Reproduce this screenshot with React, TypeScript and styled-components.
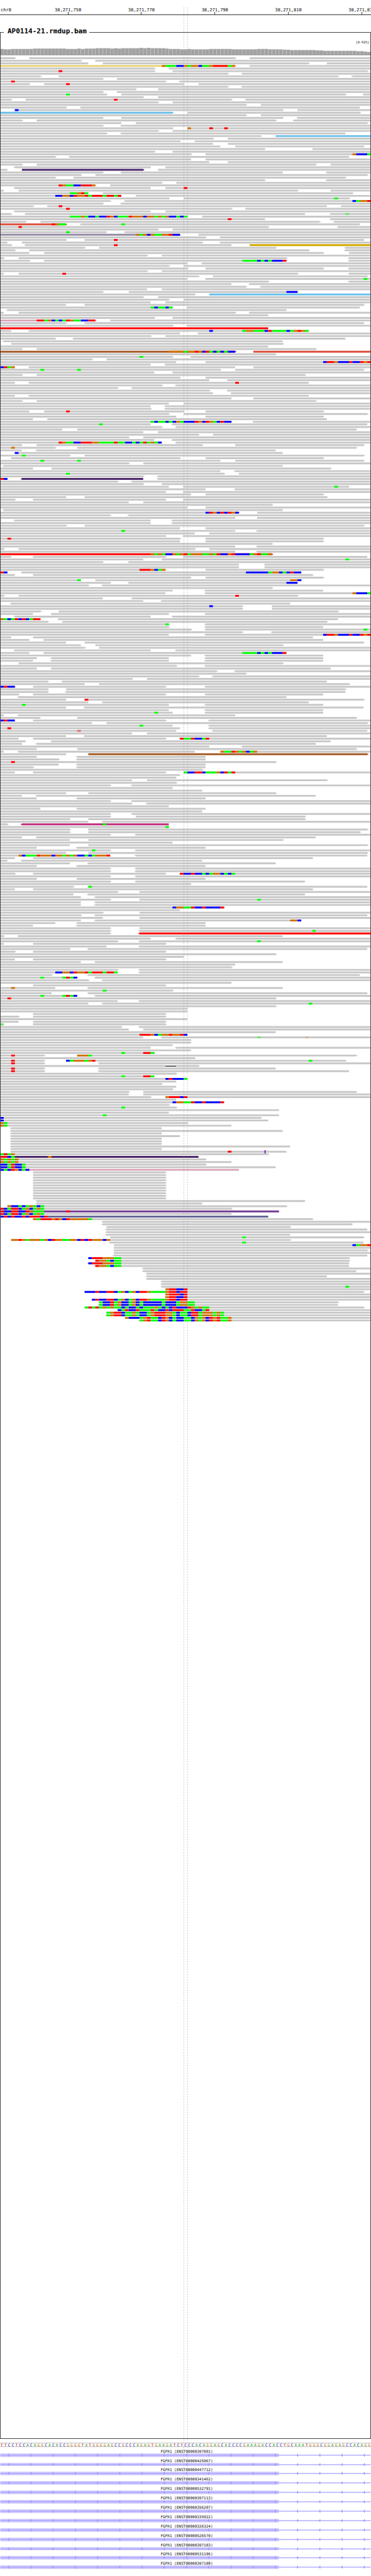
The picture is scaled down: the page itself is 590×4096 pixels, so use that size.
import React from "react";
import styled, { createGlobalStyle } from "styled-components";

const BASES = 101;
const WIDTH = 1000;
const ROW = 7;
const MAX_DEPTH = 915;

/* One line per pileup row. "12-50>" is a read with its direction tip, a
   trailing letter picks the read colour, "18:ACG" are mismatching bases,
   "D45-48" is a deletion and "I72" an insertion. */
const PILEUP = `-4> 8-64> 68-
-22> 26-
-24 28-84> 89-
-64>Y 44:GAAACCGAGGCAAGTTTTAG 68-
-42> 46-
-42> 47-100> 16:T
-62> <66-
-11> 16-92> <96-
-28> <32-
-45> <49- 3:T
-8> 12-50> 54- 18:T
-62> <66-
-37> 43-
-28> <32-
-29> 33-94> <99- 18:A
-39> 43-
-3> 7-63> <67- 31:T
-43> 47-
-67> 71-
-18> <22-98
-0> 4-77> 81- 4:C
-47>L 51-98>
-67> 71-
-28> 33-77> <81-
-6> 10-75> <80-
-33 37-100>
-28> <33-
-47> 51- 51:G 57:T 61:T
-43> 47-
-29> <33-94
-71> 75-L
-58> 62-
-49> 53-
-58 62-
-60 64-99>
-72> 85-
-42> 47-
-52> 56- 96:GCCCA
-15> <19-95
-52 56-
-57 62-
-6> 10-86> 90-
-0> <4-41 45-
-2 6-39>P 43-
-28> <33-77 <89-
-22> 26-100>
-15> 20-94>
-72> <89-
-44> 48-
-26> 30- 16:TGAACCTTTG
-0> <4-41 45- 50:T
-1 5-81> 90-
-24 28-96> 19:AAGTA
-33 37- 15:CCGGCTGGTATTTATTAT
-46> 50-95> 91:A
-30> <34- 96:CAGGT
-28> <33-
-9> <13-89 <93- 16:T
-63> <67- 18:T
-0> <4-41 45-
-3> <7-83 <90- 94:a
-51> 55- 19:AAAGACCACCTGCAAATGGGCGGAGAGCCACA
-72> <90- 62:T
-7> 11-87> <91-
-18>R 14:TGAA <22-98 33:A
-73> <92- 5:T
-43> 47-
-29 <34- 18:A
-49>V 37:GAGCGAAGGTCC 54-
-56> <60-
-18> 23-99> 31:T
-2 6-55> <60-
-3> <7-63 68-O 31:T
-23> 27-75> <94-
-4> 8-84> <94-
-8 12-88> 95-
-40> 44-
-1> 5-78> <95-
-8> 12-78> <95- 66:AAAACACACCCT
-51 <55-
-46> 50-
-51> 56-88> <95-
-40> 44-
-1 5-81> <95- 17:T
-54> 58-100>
-51 56- 99:A
-73> <95-
-63 <68-
-67> <71-
-40 44-
-28> 35-81> 78:CCC
-53> 57-L
-39> 43-
-46> 50-
-41 45-
-18 23-99>
-47> <51-98 41:ACAACA
<2-78
-1 5-64> <68-
-73
-42> 47-
-26>K 10:TTAGCACATGAACCTT 30-
-18> 23-99>
-47> <51-
-73Z
-3 <8-84 57:C 66:AGGAAACTAAAACAGTGA
-49 <54-
-41> 45-
-15> <20-94
<1-77
3-77>
-73
-6> 10-86>
-64>N 46:GGGGAGGTGCTACACACC 69-R
-75>
-47> <52- 38:A
-25> 29-
-48 56- 88:CTTGCCCTCCTGT
-41 <45-
-4 0:CTAG <8-64 69-
-60> 64-99> 11:A 21:A
-42 47-
-6> 10-83>
-49> 56-
-57 <62-
-4 <8-84 64:T
-44> <48-
-32> <36-
-57> <62-
-58 <63-
-4 <8-84
-63 69-
-6> 10-86>
-46 50-
-41 <45-
-41> <45-
-8 12-50> 56-88> 18:T
-46> 50-100>
-48 56-88>
-9 <13-89
-63 41:ACAACACGACCCTGCTGACTCC <69-
-41 <47-100 27:A
-44> <48-
-17 21-97>
-39 43-
-54> 58-
-35> 39-
-42 <47-
-44 16:TGAACCTTTGGAAAATAACCACATAGAC <48-
-6 10-55> 64-99>
-15> 21-97> 3:G
-6 <10-75
<4-77 4:C
-19> 23-99> 6:A
3-49> 56-88>
-60 64-99> 11:A 21:A
-35> 39-
<1-77
-9 14-90>
-60 <64-
-61> 65- 18:A
-39> <43-
-2> 0:TC <6-39P <43-
-32> <36-
-39> 44-
-46 <50-95 91:A
-56 <64-
-45> <50-
-52 56-88>
-18 23-89>
-4> 9-45> <50-
-35 39-
-74>
-51 56-
<1-77
-65> 56:CTGCTCTGC 70-
-30> <35-
-64 70-
-0> <4-41 <47-
-41 <47-
-18> 23-99>
-49 56-
-64 <70- 33:A
-53 57-
-45> <50-
-49> 56-88> 2:T
-49 56-88>
-74>
-64 <70-
-1> 5-53> 57-
-64 <70-
-74>Z 41:GAGACCGAGTAGGGAAGATCCGTCCCCAGTAAG
-3 9-45> <50-100
-39 44- 94:A
-28> <35-
-65 72-
-65 72-
-45> 38:TTTGCAG 56-88>
-2 0:TC <6-82 67:CCCCCCAGGCACTCC
-4 9-85>
-52 56-88>
-22 26-82> 21:A 79:GGC
-30> <35-81 78:CCC
-24> <28-
-74>
-47 <56-88
-45 <56- 96:GCCCA
-1> 5-81> 64:T
-28 <36-
-39 <44-
<3-79
-66> 74- 57:C
-66> 74-
-11> 16-92>
-9 <14-46 <56-
<4-41 <47-
-11 0:GACATCTCATT <16-92
-13> 17-89>
-46> <56- 45:A
-46> <56-88
-52> <56- 99:A
-66> <74-
-46 <56- 88:CTTGCCCTCCTGT
-3 9-85>
-8 <12-88
-18 23-99>
-22 26-77>
-23> 27-
<4-41 <48-
-8 <12-78 66:AAAACACACCCT
-52 <56-88
-10 <14-46 <56-88
-9 <14-46 <56-88
5-77>
-48> <56-
-10 <14-90
-59> <64-
-67>
-54> <58-
-36> 40-
-13> <17-89
-23 27-95>
-4> 0:CTCC 9-45> <56-
-13> 18-94>
-13> <18-94
-5> 9-45> <56-88
<5-78
-18 23-99> 23:T
-24 <28-84
-46 <56-88 6:A
-18 <23-99
-46 <56-88
-47 <56-88 42:A
-1 <5-64
-11 21-97>
-4 0:CTCC 9-45> <57-
-25 29-100>
-47 <57- 38:A
-49 <57- 2:T
-48 <58-100 21:t
-36 40-
-18 <23-89
-5 9-45> <49- 49:TAATCCAT
-7 <14-90
-6 <10-86
-57 <66-
-10 21-97>
-1 <5-53 60- 60:GAATGAGCAG
-18 24-100>N
-10 <21-56
-16> <21-56
-75> 3:T
-16 <21-56
-9> <21-56
-55>
-4 9-45> 50- 50:ACCTTCAAAGCTAT
-49
-48
-36 40-89>
-48>
-30> <36-
-47
-55
-18 24-75>
-6 <10-86
-10 <21-56
-30> <36-
-36 <40-
-46
-11 <21-56
-55
-30> <36-
-30> 37-83>
-19> 24-83>
-24 <28-
-2> <6-46M 28:A
-46 45:A
-19> 24-100>
-19> 24-98>
-30> <37-
-6 <10-86
-19 24-77>
-47
-19 24-100>
-10 <21-56
-30> <37- 25:A
-18 24-100>
-30 5:GCAAATGGGCGGAGAGCCACAGGGT <37-100
-4 9-85>
-2 <6-55
-19 <24-75
-10 <21-56
-30> <37-
-30> <37-
-4> 9-45> <49- 49:TCCTCCACAGGCACA
-30> <37-
-10 <21-56
-30> <37-83
-52
-20> <24-100 24:A
-4 9-85>
-32> 38-
-20 <24-83
-22 <26-
-30> 38- 70:A
-22 <26-
-22 <26-
-61> 47:CGGAATCCTCCCCT
-49
-28> 38-
-22> <26-100
-28 38-
-22 <26-82 79:GGC
-15 <21-56
-9 <21-56
-30> 38-
-30> <38- 85:A
-30> <38-Z
-1> <5-77
-41 <48-
-32> <38- 70:A
-1 9-45>
-29 <38-
-19> <24-100
-4> 9-45>
-75>
-50
-4 9-45>
-22 <26-77
-64
-63>
-32> <38-
-32> 15:CCGGCTGGTATTTATTA <38-
-14> <24-98
-21> <26- 11:A 17:ATAC
-24> <28-
-63
-0> 9-45>
-15 <24-77 3:G
-47> 28:A
-14 <24-100
-21 <26- 11:A 17:ATAC
-75> 2:T
-32 <38-
-24 <28- 84:A
-75>
-51
-51
9-45>
-5> 9-45>
-51
-5 9-45>
-1 0:a 9-45>
-33> <38-
-35 39-
-75
-51 38:TTTGCAGGTGGTC
-39 <44- 70:a 83:g
-52
-52
-47
-41 <48-
-52
-42> 33:A 39:TTA
-12> 3:T 21-97> 21:GGGA
-53>
-12> 3:T 18-94> 18:CAGGGAGT 84:A
-12> 3:T <27-
-45 D45-48 48-54>
-12> 3:T <27-75
-12> 3:T <27-95
-48>
-42 33:A 39:TTA
-51 45:CTCCCA
-48
-44>
-48
-47>
-35> 39-97>
-35 39-
-41> 45- 45:GTTTCT
-48
-61 47:CGGAATCCTCCCCT
-46>
-48> 33:A
-76
-46
-76 28:A
-71> 0:C
-73 0:C
-51> 0:GA
-63 0:GA
<3-44
<3-77
<3-44
<3-49
<3-44
<3-44
<3-44
<3-79
<3-44
<3-78 62:T I72
-73> 0:ATAG
-54P 0:TTCA 13:G
-56> 0:GAGAG
-63 0:GAGAG
-56> 0:CCATCCA
-75 0:CCATCCA
-65K 0:CACTGCAC
9-45>
9-45>
9-45>
9-45>
9-45>
9-45>
9-45>
9-45>
9-45>
9-45>
9-45>
<10-83
<10-55
2-78> 2:GCCACAGACA
-63> 0:TCATTCAGCAGA
-76W 0:TCCTTCCTGAAA 18:T
-63 0:TCATTCAGCAGA
-73S 0:CTCTCCTCTTTCT
9-85> 9:GATTTGTGCTGGGGGA
<28-
<28-96
29-79>
<29-100
<29-
<29-79
30-99> 66:A
3-79> 3:GGTGAGGGAGCTGGAAGGCTCTGGGCG
<30-99 66:A
31- 96:CAGGT
31-
31-100>
31-
<31-100
24-95> 24:CTTTGGGAA
26-95> 26:TGGACAA
<24-95 24:CTTTGGGAA
<26-95 26:TGGACAA
<39-
<39-97
<40-
<40-89
<40-
<44-
<44-
<44- 94:A
45- 45:GTTCCT
23-99> 23:CCCTCCTTCAGCAGCTTGAAAAGTTCTT
<45- 45:GTTTCT
<45- 45:GTTCCT
<25- 25:CTCCTTCAGCAGCTTGAAAAGTTCTT
27-92> 27:ACCTAGCCAGCACCCCCACCCAGGAA
<27-92 27:ACCTAGCCAGCACCCCCACCCAGGAA
23-99> 23:ATATAGAGAACACCACAAAGACACTCCCTGAGAA
32- 32:CATCCTAAATACCTCTTTAATCCAT
29- 29:AGTTCAAGACCAGTTTGGACAACTTAGGGAGA
<29- 29:AGTTCAAGACCAGTTTGGACAACTTAGGGAGA
34- 34:GCCCAGTAACTGCACCAACGAGCTGTAAG
<38- 38:AGTAACTGCACCAACGAGCTGTAAG`;

const READ_COLORS: Record<string, string> = {
  "": "#c8c8c8",
  Y: "#e8cf73",
  L: "#6bbfe8",
  R: "#db4f3c",
  V: "#948aa3",
  O: "#d1a900",
  K: "#dba3b5",
  Z: "#ff0000",
  N: "#a65a24",
  P: "#4a2569",
  M: "#c12e7e",
  W: "#723992",
  S: "#666699",
};

const MISMATCH_COLORS: Record<string, string> = {
  A: "#00ff00",
  C: "#0000ff",
  G: "#d17105",
  T: "#ff0000",
  a: "#6be36b",
  t: "#e07070",
  g: "#cdb49a",
};

const LETTER_COLORS: Record<string, string> = {
  A: "#009600",
  C: "#000096",
  G: "#b06a10",
  T: "#b40000",
};

/* Coverage heights as [number of bases, height]. */
const COVERAGE: [number, number][] = [
  [1, 16], [2, 15], [6, 16], [9, 17], [3, 16], [1, 17], [1, 16], [3, 17],
  [4, 18], [1, 17], [1, 18], [1, 17], [5, 18], [1, 19], [1, 18], [1, 19],
  [4, 18], [1, 17], [3, 16], [2, 15], [1, 16], [5, 15], [6, 16], [7, 15],
  [3, 16], [4, 15], [2, 14], [7, 13], [2, 12], [9, 11], [2, 10], [1, 9], [1, 8],
];

const SEQUENCE =
  "TTCCTCCACAGGCACACCGGGGTATGGGGAGCCGCCCAGAGTGAAGATCTCCCACAGGAGCACCCCGAAAGACCACCTGCAAATGGGCGGAGAGCCACAGG";

const TICKS = [
  { column: 19, label: "38,271,750" },
  { column: 39, label: "38,271,770" },
  { column: 59, label: "38,271,790" },
  { column: 79, label: "38,271,810" },
  { column: 99, label: "38,271,830" },
];

const TRANSCRIPTS = [
  "ENST00000397091",
  "ENST00000425967",
  "ENST00000447712",
  "ENST00000341462",
  "ENST00000532791",
  "ENST00000397113",
  "ENST00000356207",
  "ENST00000335922",
  "ENST00000326324",
  "ENST00000526570",
  "ENST00000397103",
  "ENST00000531196",
  "ENST00000397108",
];

const GlobalStyle = createGlobalStyle`
  body {
    margin: 0;
    background: #fff;
    color: #000;
    font-family: "DejaVu Sans Mono", monospace;
  }
`;

const Page = styled.main`
  position: relative;
  overflow: hidden;
  padding-bottom: 12px;
`;

const Ruler = styled.header`
  display: grid;
  grid-template-columns: repeat(${BASES}, minmax(0, 1fr));
  padding-top: 12px;
  border-bottom: 1px solid #333;
  font-size: 7px;
  line-height: 8px;
`;

const Chromosome = styled.span`
  grid-column: 1;
  grid-row: 1;
  padding-left: 1px;
  white-space: nowrap;
`;

const Tick = styled.div<{ $column: number }>`
  grid-column: ${(p) => p.$column};
  grid-row: 1;
  display: flex;
  flex-direction: column;
  align-items: center;
  white-space: nowrap;

  &::after {
    content: "";
    width: 1px;
    height: 4px;
    margin-top: -1px;
    background: #444;
  }
`;

const Track = styled.section`
  position: relative;
  margin-top: 27px;
  padding-bottom: 8px;

  &::after {
    content: "";
    position: absolute;
    inset: 0;
    border: 1px solid #444;
    pointer-events: none;
  }
`;

const TrackHead = styled.div`
  display: flex;
  justify-content: space-between;
  align-items: flex-end;
  height: 25px;
`;

const TrackTitle = styled.h1`
  position: relative;
  z-index: 1;
  align-self: flex-start;
  margin: -8px 0 0 6px;
  padding: 0 4px 0 6px;
  background: #fff;
  font-size: 11px;
  line-height: 14px;
  font-weight: bold;
`;

const DepthRange = styled.span`
  padding: 0 3px 5px 0;
  font-size: 5px;
  line-height: 7px;
`;

const Plot = styled.svg`
  display: block;
  width: 100%;
`;

const SequenceRow = styled.div`
  display: grid;
  grid-template-columns: repeat(${BASES}, minmax(0, 1fr));
  margin-top: 6px;
  border-top: 1px solid #c4c4c4;
  border-bottom: 1px solid #c4c4c4;
  font-size: 6px;
  line-height: 5px;
`;

const Base = styled.span<{ $base: string }>`
  display: flex;
  justify-content: center;
  color: ${(p) => LETTER_COLORS[p.$base]};
`;

const Transcripts = styled.ul`
  display: grid;
  grid-auto-rows: 1fr;
  height: 192px;
  margin: 1px 0 0;
  padding: 0;
  list-style: none;
`;

const Transcript = styled.li`
  padding-top: 2px;
`;

const TranscriptName = styled.div`
  padding-left: 4px;
  font-size: 6px;
  line-height: 7px;
  text-align: center;
`;

const Guides = styled.svg`
  position: absolute;
  inset: 0;
  width: 100%;
  height: 100%;
  pointer-events: none;
`;

const at = (base: number) => Math.round((base * WIDTH) / BASES);

function Token({ token, y }: { token: string; y: number }) {
  const deletion = /^D(\d+)-(\d+)$/.exec(token);
  if (deletion) {
    const x = at(+deletion[1]);
    return <rect x={x} y={y + 2} width={at(+deletion[2]) - x} height={2} fill="#000" />;
  }
  const insertion = /^I(\d+)$/.exec(token);
  if (insertion) {
    const x = at(+insertion[1]);
    return (
      <path
        d={`M${x - 1} ${y - 1}h5v2h-1v5h1v2h-5v-2h1v-5h-1z`}
        fill="#7a1fd6"
      />
    );
  }
  const mismatch = /^(\d+):(\w+)$/.exec(token);
  if (mismatch) {
    const runs = mismatch[2].match(/(.)\1*/g) || [];
    let base = +mismatch[1];
    return (
      <>
        {runs.map((run) => {
          const start = base;
          base += run.length;
          return (
            <rect
              key={start}
              x={at(start)}
              y={y}
              width={at(base) - at(start)}
              height={5}
              fill={MISMATCH_COLORS[run[0]]}
            />
          );
        })}
      </>
    );
  }
  const read = /^(<?)(\d*)-(\d*)(>?)([A-Z]?)$/.exec(token);
  if (!read) return null;
  const from = at(+(read[2] || 0));
  const to = at(+(read[3] || BASES));
  const right = read[4] ? "v1h2v1h2v1h-2v1h-2v1" : "v5";
  const left = read[1] ? "v-1h-2v-1h-2v-1h2v-1h2v-1" : "v-5";
  return <path d={`M${from} ${y}H${to}${right}H${from}${left}z`} fill={READ_COLORS[read[5]]} />;
}

function Pileup() {
  return (
    <Plot viewBox={`0 0 ${WIDTH} ${MAX_DEPTH * ROW}`} role="img" aria-label="Aligned reads">
      {PILEUP.split("\n").map((line, row) => {
        const tokens = line.split(" ");
        const isRead = (t: string) => !t.includes(":") && !t.startsWith("I");
        const ordered = [...tokens.filter(isRead), ...tokens.filter((t) => !isRead(t))];
        return (
          <g key={row}>
            {ordered.map((token) => (
              <Token key={token} token={token} y={row * ROW} />
            ))}
          </g>
        );
      })}
    </Plot>
  );
}

function Coverage() {
  const heights = COVERAGE.flatMap(([count, height]) => Array<number>(count).fill(height));
  return (
    <Plot viewBox={`0 0 ${WIDTH} 25`} role="img" aria-label="Coverage">
      {heights.map((height, base) => (
        <g key={base}>
          <rect x={at(base)} y={19 - height} width={at(base + 1) - at(base)} height={height} fill="#b0b0b0" />
          <rect x={at(base) + 1} y={20 - height} width={at(base + 1) - at(base) - 2} height={height - 1} fill="#a2a2a2" />
        </g>
      ))}
      <rect x={0} y={19} width={WIDTH} height={1} fill="#747474" />
    </Plot>
  );
}

function GeneModel() {
  const arrows = Array.from({ length: 17 }, (_, i) => 20 + i * 60);
  return (
    <Plot viewBox={`0 0 ${WIDTH} 10`} aria-hidden="true">
      <rect x={0} y={0} width={752} height={10} fill="#d2ccff" />
      <rect x={0} y={4} width={WIDTH} height={2} fill="#9f99ff" />
      {arrows.map((x) => (
        <path key={x} d={`M${x} 5L${x + 3} 1h1v8h-1z`} fill="#9f99ff" />
      ))}
    </Plot>
  );
}

export default function App() {
  return (
    <>
      <GlobalStyle />
      <Page>
        <Ruler>
          <Chromosome>chr8</Chromosome>
          {TICKS.map((tick) => (
            <Tick key={tick.column} $column={tick.column}>
              {tick.label}
            </Tick>
          ))}
        </Ruler>
        <Track>
          <TrackHead>
            <TrackTitle>AP0114-21.rmdup.bam</TrackTitle>
            <DepthRange>[0-{MAX_DEPTH}]</DepthRange>
          </TrackHead>
          <Coverage />
          <Pileup />
        </Track>
        <SequenceRow>
          {SEQUENCE.split("").map((base, i) => (
            <Base key={i} $base={base}>
              {base}
            </Base>
          ))}
        </SequenceRow>
        <Transcripts>
          {TRANSCRIPTS.map((id) => (
            <Transcript key={id}>
              <TranscriptName>FGFR1 ({id})</TranscriptName>
              <GeneModel />
            </Transcript>
          ))}
        </Transcripts>
        <Guides viewBox="0 0 1000 6940" preserveAspectRatio="none" aria-hidden="true">
          {[495.5, 505.5].map((x) => (
            <path key={x} d={`M${x} 20V6918`} stroke="#969696" strokeWidth={1} strokeDasharray="3 4" />
          ))}
        </Guides>
      </Page>
    </>
  );
}
